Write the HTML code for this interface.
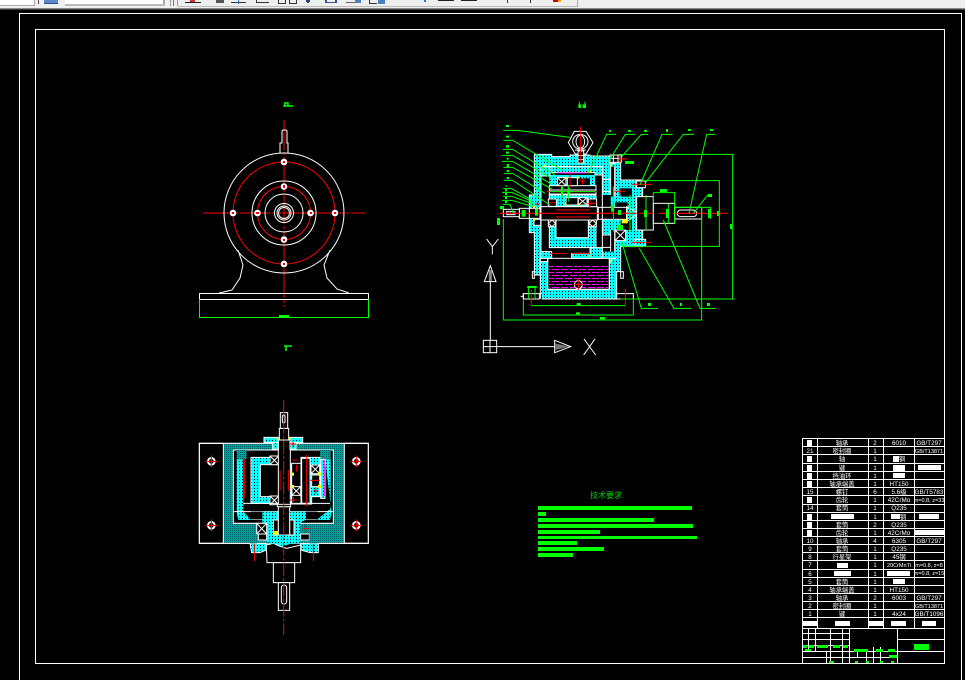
<!DOCTYPE html>
<html><head><meta charset="utf-8"><title>CAD</title>
<style>
html,body{margin:0;padding:0;background:#000;width:965px;height:680px;overflow:hidden}
svg{display:block;position:absolute;left:0;top:0}
text{font-family:"Liberation Sans","Noto Sans CJK SC",sans-serif;fill:#fff;font-size:6.300px;text-anchor:middle}
.w{fill:none;stroke:#fff}
.g{fill:none;stroke:#0f0}
.r{fill:none;stroke:#f00}
</style></head><body>
<svg width="965" height="680" viewBox="0 0 965 680" xmlns="http://www.w3.org/2000/svg">
<defs>
<pattern id="hz" width="9" height="9" patternUnits="userSpaceOnUse"><rect width="9" height="9" fill="#0ff" shape-rendering="crispEdges"/><rect x="3" y="3" width="3" height="3" fill="#000" shape-rendering="crispEdges"/></pattern>
<pattern id="hzd" width="6" height="6" patternUnits="userSpaceOnUse"><rect width="6" height="6" fill="#00a0a0" shape-rendering="crispEdges"/><rect width="3" height="3" fill="#005f5f" shape-rendering="crispEdges"/></pattern>
<pattern id="mg" width="27" height="18" patternUnits="userSpaceOnUse"><rect width="27" height="18" fill="#000" shape-rendering="crispEdges"/><rect x="0" y="0" width="21" height="3" fill="#f0f" shape-rendering="crispEdges"/><rect x="12" y="9" width="15" height="3" fill="#f0f" shape-rendering="crispEdges"/><rect x="0" y="9" width="6" height="3" fill="#f0f" shape-rendering="crispEdges"/></pattern>
</defs>
<rect width="965" height="680" fill="#000"/>

<!-- toolbar -->
<g shape-rendering="crispEdges">
<rect width="965" height="8" fill="#efefef"/>
<rect y="8" width="965" height="1" fill="#8c8c8c"/>
<rect y="9" width="965" height="1" fill="#3a3a3a"/>
<rect width="34" height="5" fill="#fff"/><rect x="34" width="1" height="6" fill="#aaa"/><rect y="5" width="35" height="1" fill="#aaa"/>
<rect x="38" width="1" height="4" fill="#555"/>
<rect x="44" width="14" height="3" fill="#5b87c9"/><rect x="44" y="3" width="14" height="1" fill="#2a4f90"/>
<rect x="65" width="98" height="4" fill="#fff"/><rect x="163" width="2" height="6" fill="#aaa"/><rect x="65" y="4" width="100" height="2" fill="#bbb"/>
<rect x="170" width="1" height="6" fill="#999"/><rect x="173" width="1" height="6" fill="#777"/><rect x="177" width="1" height="6" fill="#999"/>
<rect x="577" width="1" height="7" fill="#aaa"/><rect x="178" y="6" width="399" height="1" fill="#bbb"/>
<rect x="185" y="2" width="16" height="1" fill="#222"/><rect x="190" width="5" height="2" fill="#c33"/>
<rect x="216" width="8" height="3" fill="#555"/>
<rect x="231" y="2" width="15" height="1" fill="#333"/><rect x="238" width="1" height="4" fill="#27c"/>
<rect x="256" y="2" width="13" height="1" fill="#333"/><rect x="256" width="1" height="2" fill="#333"/>
<rect x="278" width="1" height="3" fill="#333"/><rect x="285" width="1" height="3" fill="#333"/><rect x="278" y="3" width="8" height="1" fill="#333"/>
<rect x="289" width="1" height="3" fill="#333"/><rect x="296" width="1" height="3" fill="#333"/><rect x="289" y="3" width="8" height="1" fill="#333"/>
<rect x="306" width="4" height="2" fill="#247"/><rect x="307" y="2" width="2" height="1" fill="#247"/>
<rect x="325" y="2" width="12" height="1" fill="#358"/><rect x="325" width="2" height="2" fill="#358"/><rect x="335" width="2" height="2" fill="#358"/>
<rect x="346" y="2" width="12" height="1" fill="#666"/><rect x="355" width="6" height="3" fill="#4a7fc0"/>
<rect x="369" y="3" width="8" height="1" fill="#333"/><rect x="369" width="1" height="3" fill="#333"/><rect x="378" width="7" height="4" fill="#4a7fc0"/>
<rect x="424" width="2" height="2" fill="#27c"/>
<rect x="438" width="16" height="1" fill="#222"/><rect x="461" width="16" height="1" fill="#222"/>
<rect x="507" width="1" height="3" fill="#333"/><rect x="530" width="1" height="3" fill="#333"/>
<rect x="553" width="5" height="2" fill="#c00"/><rect x="558" width="3" height="2" fill="#da0"/>
</g>

<!-- frames -->
<g shape-rendering="crispEdges" fill="none" stroke="#fff">
<path d="M19.500 680V13.500H961.500V680"/>
<rect x="35.500" y="29.500" width="909" height="634"/>
</g>

<!-- front view (left) -->
<g>
<path d="M203 213H365" stroke="#f00" stroke-dasharray="30 2 3 2" fill="none"/>
<path d="M284 120V307" stroke="#f00" stroke-dasharray="30 2 3 2" fill="none"/>
<g fill="none" stroke="#fff">
<circle cx="284" cy="213" r="60"/>
<circle cx="284" cy="213" r="32"/>
<circle cx="284" cy="213" r="19"/>
<circle cx="284" cy="213" r="9.500"/>
<circle cx="284" cy="213" r="7"/>
<circle cx="284" cy="213" r="5.500"/>
<path d="M280 153V143H282V131L283 130H286L287 131V143H288V153"/>
<path d="M238 250L243 265L240 278L232 290L219 293"/>
<path d="M330 250L324 265L327 278L337 289L349 293"/>
</g>
<rect x="199.500" y="293.500" width="169" height="6" fill="none" stroke="#fff" shape-rendering="crispEdges"/>
<circle cx="284" cy="213" r="51" fill="none" stroke="#f00"/>
<circle cx="284" cy="213" r="26.500" fill="none" stroke="#f00"/>
<g fill="#fff">
<circle cx="284" cy="162" r="3.300"/><circle cx="284" cy="264" r="3.300"/><circle cx="233" cy="213" r="3.300"/><circle cx="335" cy="213" r="3.300"/>
<circle cx="284" cy="186.500" r="3.300"/><circle cx="284" cy="239.500" r="3.300"/><circle cx="257.500" cy="213" r="3.300"/><circle cx="310.500" cy="213" r="3.300"/>
</g>
<g fill="#f00">
<rect x="283" y="161" width="2" height="2"/><rect x="283" y="263" width="2" height="2"/><rect x="232" y="212" width="2" height="2"/><rect x="334" y="212" width="2" height="2"/>
<rect x="283" y="185" width="2" height="3"/><rect x="283" y="239" width="2" height="2"/><rect x="256" y="212" width="3" height="2"/><rect x="310" y="212" width="2" height="2"/>
</g>
<path d="M199.500 299V317.500H368.500V299" fill="none" stroke="#0f0" shape-rendering="crispEdges"/>
<rect x="279" y="315" width="10" height="2" fill="#0f0"/>
<path d="M283 106H293M285 106V102M285 106V103H288V106" fill="none" stroke="#0f0" stroke-width="1.500"/>
</g>

<!-- main section (right) drawn in 3x coordinates -->
<g transform="translate(480 95) scale(.33333)" stroke-width="3">
<path d="M163 178H215V185H270V180H330V183H390V205H405V180H422V255H488V305H470V405H488V455H422V530H410V612H185L180 540H163V413H148V300H163Z" fill="url(#hz)"/>
<!-- interior -->
<path d="M183 215H270V212H330V215H367V300H392V345H367V420H392V470H367V490H183V300H183Z" fill="#000"/>
<rect x="392" y="215" width="12" height="90" fill="#000"/><rect x="392" y="405" width="12" height="65" fill="#000"/>
<rect x="422" y="280" width="34" height="25" fill="#000"/><rect x="405" y="322" width="38" height="50" fill="#000"/>
<rect x="422" y="375" width="34" height="30" fill="#000"/>
<!-- oil tank -->
<rect x="203" y="490" width="185" height="93" fill="#000" stroke="#fff"/>
<rect x="207" y="507" width="178" height="72" fill="url(#mg)"/>
<path d="M183 470H215V490H183ZM330 458H367V490H275V475H330Z" fill="url(#hz)" stroke="#fff"/>
<path d="M181 490H203V500H181Z" fill="#000" stroke="#fff"/>
<!-- planet gear body -->
<path d="M208 390H228V428H325V375H348V458H208Z" fill="url(#hz)" stroke="#fff"/>
<rect x="228" y="375" width="97" height="53" fill="#000" stroke="#fff"/>
<path d="M208 240H345V275H330V250H260V275H208Z" fill="url(#hz)"/>
<path d="M208 215H367V240H345V233H208Z" fill="url(#hz)" stroke="#fff"/>
<path d="M208 300H348V335H208Z" fill="url(#hz)" stroke="#fff"/>
<path d="M183 215H210V243H183Z" fill="url(#hz)" stroke="#fff"/>
<!-- shafts -->
<rect x="208" y="272" width="140" height="28" fill="#000" stroke="#fff"/>
<path d="M208 285H348M208 297H348" class="w"/>
<rect x="232" y="248" width="26" height="24" fill="#000" stroke="#fff"/><path d="M232 248L258 272M258 248L232 272" class="w"/>
<rect x="295" y="308" width="26" height="22" fill="#000" stroke="#fff"/><path d="M295 308L321 330M321 308L295 330" class="w"/>
<rect x="262" y="248" width="30" height="24" fill="#000" stroke="#fff"/><rect x="258" y="308" width="36" height="22" fill="#000" stroke="#fff"/>
<path d="M230 346Q285 330 335 346V370Q285 354 230 370Z" fill="url(#hz)" stroke="#fff"/>
<rect x="180" y="335" width="172" height="40" fill="#000" stroke="#fff"/>
<rect x="118" y="340" width="62" height="30" fill="#000" stroke="#fff"/>
<rect x="70" y="343" width="48" height="22" fill="#000" stroke="#fff"/><rect x="80" y="350" width="25" height="9" fill="none" stroke="#fff"/>
<rect x="355" y="337" width="85" height="36" fill="#000" stroke="#fff"/>
<path d="M440 335L475 355L440 380Z" fill="url(#hz)" stroke="#fff"/>
<path d="M405 405H437V437H405Z" fill="#000" stroke="#fff"/><path d="M405 405L437 437M437 405L405 437" class="w"/>
<rect x="205" y="375" width="22" height="20" fill="#000" stroke="#fff"/><path d="M205 385L216 375L227 385L216 395Z" class="w"/>
<rect x="327" y="375" width="22" height="20" fill="#000" stroke="#fff"/><path d="M327 385L338 375L349 385L338 395Z" class="w"/>
<rect x="162" y="373" width="20" height="18" fill="#000" stroke="#fff"/>
<rect x="205" y="312" width="24" height="22" fill="#000" stroke="#fff"/>
<path d="M325 312H350V335H325Z" fill="#000" stroke="#fff"/>
<!-- right output -->
<rect x="470" y="305" width="50" height="100" fill="#000" stroke="#fff"/>
<rect x="520" y="325" width="64" height="60" fill="#000" stroke="#fff"/>
<rect x="584" y="337" width="81" height="35" fill="#000" stroke="#fff"/>
<rect x="592" y="345" width="58" height="20" rx="10" fill="none" stroke="#fff"/>
<!-- housing outline -->
<path d="M163 178H215V185H270V180H330V183H390V205H405V180H422V255H488V305M488 405V455H422V530H410V612H185M180 540H163V413H148V300H163V178" class="w"/>
<path d="M183 243V490M367 233V490M392 215V300M404 215V305M392 405V470M404 405V470M367 253H392M367 290H392M367 420H392M367 457H392" class="w"/>
<path d="M203 490V583H388V490M181 500V612M410 490H388" class="w"/>
<rect x="130" y="596" width="48" height="16" fill="none" stroke="#fff"/>
<path d="M178 596H185M410 596H460V612H410" class="w"/>
<path d="M183 215H367" class="w"/>
<rect x="157" y="530" width="6" height="20" fill="none" stroke="#fff"/><rect x="422" y="530" width="8" height="20" fill="none" stroke="#fff"/>
<circle cx="295" cy="569" r="12" fill="#000" stroke="#fff"/>
<path d="M130 604H122M130 596V612" class="w"/>
<!-- eyebolt -->
<path d="M283 112H318L339 146L318 180H286L265 146Z" class="w" transform="translate(0 -3)"/>
<ellipse cx="301" cy="140" rx="23" ry="22" class="w"/><ellipse cx="301" cy="140" rx="13" ry="19" class="w"/>
<rect x="294" y="168" width="17" height="36" fill="#000" stroke="#fff"/><path d="M294 182H311M294 194H311" class="w"/>
<path d="M285 165H317" class="w"/>
<rect x="390" y="180" width="34" height="22" fill="#000" stroke="#fff"/><path d="M400 180V202M414 180V202M390 190H424" class="w"/>
<rect x="470" y="258" width="26" height="20" fill="#000" stroke="#fff"/><rect x="465" y="433" width="32" height="20" fill="url(#hz)" stroke="#fff"/>
<!-- red -->
<path d="M60 355H470M478 355H520M536 355H560M580 355H745" stroke="#f00" stroke-width="3.500" fill="none"/>
<path d="M301 95V205" stroke="#f00" stroke-width="3"/>
<path d="M210 475H262M276 475H330M232 234H325" stroke="#f00" fill="none"/>
<path d="M228 366H330M228 345H330" stroke="#f00" fill="none"/>
<path d="M270 232V280M200 290H350" class="r"/>
<path d="M420 278V300M404 289H436M415 192H442M420 183V202M455 268H515M455 442H515M330 313V336M322 325H348M298 258H318M308 250V268M208 323H225M165 327H180M172 320V334" class="r"/>
<path d="M154 585V630M436 582V630M295 550V585M280 568H310" class="r"/>
<path d="M232 234H325" stroke="#f0f" fill="none"/>
<!-- yellow -->
<g fill="#ff0">
<rect x="425" y="373" width="18" height="12"/><rect x="390" y="208" width="6" height="7"/><rect x="327" y="226" width="6" height="7"/><rect x="254" y="245" width="6" height="6"/><rect x="291" y="245" width="6" height="6"/><rect x="254" y="326" width="6" height="6"/><rect x="291" y="326" width="6" height="6"/><rect x="160" y="333" width="6" height="6"/><rect x="160" y="371" width="6" height="6"/><rect x="327" y="480" width="6" height="6"/><rect x="390" y="496" width="6" height="6"/><rect x="192" y="208" width="6" height="6"/>
</g>
<!-- green leaders -->
<g fill="none" stroke="#0f0">
<path d="M70 106H112L270 127"/>
<path d="M70 136H98L248 225"/><path d="M68 163H98L225 240"/><path d="M66 181H98L215 250"/><path d="M66 199H98L215 268"/><path d="M70 217H98L215 282"/><path d="M72 235H98L195 295"/><path d="M72 256H98L210 330"/>
<path d="M70 281H95L150 312"/><path d="M66 292H95L158 320"/><path d="M70 304H95L160 327"/><path d="M66 316H95L160 335"/><path d="M68 328H90L100 355"/>
<path d="M408 118H380L325 235"/><path d="M466 118H436L385 200"/><path d="M504 118H484L425 185"/>
<path d="M578 118H546L480 270"/><path d="M642 118H610L495 265"/><path d="M705 118H680L627 355"/>
<path d="M692 301H682L640 355"/>
<path d="M534 640H484L425 440"/><path d="M633 640H582L478 460"/><path d="M708 640H660L550 375"/>
<path d="M422 178H758V612M422 612H764M415 178H464"/>
<path d="M488 257H718V454H425M718 257V454"/>
<path d="M498 300V405M584 337H692V372M520 293H584V385M520 293V325"/>
<path d="M565 325V385M400 275V410M450 300V410"/>
<path d="M70 372V675H665V337"/>
<path d="M130 612V660H460V612M154 632H436"/>
<path d="M142 575H170M146 575V612M165 575V612"/>
<path d="M245 270V320M265 270V320M210 290H345"/>
</g>
<g fill="#0f0">
<rect x="78" y="90" width="9" height="6"/><rect x="78" y="122" width="9" height="6"/><rect x="78" y="150" width="9" height="8"/><rect x="78" y="170" width="9" height="6"/><rect x="80" y="188" width="6" height="6"/><rect x="80" y="207" width="7" height="9"/><rect x="80" y="225" width="7" height="6"/><rect x="80" y="246" width="7" height="6"/>
<rect x="77" y="270" width="3" height="6"/><rect x="75" y="283" width="6" height="6"/><rect x="75" y="294" width="6" height="6"/><rect x="75" y="306" width="6" height="6"/><rect x="75" y="318" width="6" height="6"/><rect x="60" y="333" width="12" height="10"/>
<rect x="387" y="105" width="6" height="6"/><rect x="444" y="105" width="9" height="6"/><rect x="492" y="105" width="9" height="6"/><rect x="558" y="102" width="6" height="9"/><rect x="624" y="102" width="9" height="6"/><rect x="690" y="102" width="9" height="6"/><rect x="684" y="297" width="12" height="9"/>
<rect x="504" y="624" width="9" height="9"/><rect x="600" y="624" width="6" height="9"/><rect x="681" y="624" width="9" height="9"/>
<rect x="290" y="624" width="12" height="7"/><rect x="288" y="652" width="12" height="6"/><rect x="360" y="666" width="15" height="7"/>
<rect x="750" y="387" width="6" height="15"/><rect x="711" y="348" width="6" height="15"/><rect x="684" y="342" width="9" height="27"/>
<rect x="540" y="282" width="21" height="9"/><rect x="492" y="345" width="9" height="21"/><rect x="558" y="342" width="9" height="27"/>
<rect x="51" y="369" width="9" height="21"/><rect x="125" y="345" width="12" height="20"/><rect x="165" y="342" width="9" height="20"/>
<rect x="435" y="198" width="27" height="9"/><rect x="411" y="390" width="18" height="15"/><rect x="393" y="330" width="9" height="20"/><rect x="414" y="345" width="9" height="15"/>
<rect x="243" y="275" width="6" height="30"/><rect x="262" y="280" width="9" height="18"/><rect x="142" y="573" width="28" height="6"/>
</g>
<path d="M298 20V30M315 20V30" stroke="#0f0" fill="none" stroke-width="3"/>
<path d="M295 28H303V39H295ZM308 28H318V39H308Z" fill="#0f0"/>
<!-- UCS icon -->
<g fill="none" stroke="#fff">
<path d="M20 432L37 455L55 432M37 455V478"/>
<path d="M31 735V560M13 560H48L31 512Z"/>
<path d="M31 525L31 558" stroke="#888" stroke-width="9"/>
<rect x="10" y="736" width="40" height="37"/><path d="M30 736V773M10 755H50"/>
<path d="M50 755H222M224 736V773L272 755Z"/>
<path d="M312 732L347 780M345 732L311 780"/>
</g>
<path d="M226 745V765L268 755Z" fill="#777"/>
</g>

<!-- plan view (bottom-left), 3x coordinates -->
<g transform="translate(190 400) scale(.33333)" stroke-width="3">
<rect x="28" y="130" width="507" height="300" fill="#000" stroke="#fff"/>
<rect x="100" y="130" width="363" height="300" fill="url(#hzd)"/>
<path d="M140 130H420V178H405V150H308V145H256V150H170V178H140Z" fill="url(#hzd)"/>
<rect x="130" y="150" width="300" height="220" fill="#000" stroke="#fff"/>
<path d="M140 150H170V178H140ZM390 150H422V178H390Z" fill="url(#hzd)"/>
<path d="M140 178H160V335L183 360H145L140 340Z" fill="url(#hz)"/>
<path d="M405 178H422V325L380 360H420L425 335Z" fill="url(#hz)"/>
<path d="M163 295V178H158M163 178V265" class="r"/>
<path d="M183 172H240V195H268V290H240V310H183Z" fill="url(#hz)" stroke="#fff"/>
<rect x="211" y="194" width="57" height="96" fill="#000" stroke="#fff"/>
<rect x="240" y="168" width="26" height="26" fill="#000" stroke="#fff"/><path d="M240 168L266 194M266 168L240 194" class="w"/>
<rect x="240" y="288" width="26" height="26" fill="#000" stroke="#fff"/><path d="M240 288L266 314M266 288L240 314" class="w"/>
<path d="M290 195H305V310H298L290 270Z" fill="url(#hz)" stroke="#fff"/>
<rect x="305" y="190" width="28" height="122" fill="#000" stroke="#fff"/>
<path d="M333 172H390V290H365V312H333Z" fill="url(#hz)" stroke="#fff"/>
<rect x="335" y="175" width="25" height="135" fill="#000" stroke="#fff"/>
<rect x="363" y="195" width="26" height="26" fill="#000" stroke="#fff"/><path d="M363 195L389 221M389 195L363 221" class="w"/>
<rect x="306" y="260" width="26" height="26" fill="#000" stroke="#fff"/><path d="M306 260L332 286M332 260L306 286" class="w"/>
<rect x="365" y="225" width="24" height="35" fill="#000" stroke="#fff"/>
<path d="M392 178H405V295H392Z" fill="url(#hz)" stroke="#fff"/>
<path d="M130 335H430" class="w"/><path d="M160 310H420M183 358H380" class="w"/>
<!-- gear -->
<path d="M217 335H265V405H300V335H350L312 365V405H330V430H290L265 440L250 425H230V370H217Z" fill="url(#hz)"/>
<path d="M300 360L348 335V358L330 370V405H300Z" fill="url(#hz)"/>
<rect x="200" y="370" width="30" height="32" fill="#000" stroke="#fff"/><path d="M200 370L230 402M230 370L200 402" class="w"/>
<path d="M205 402H230V420H205ZM332 402H358V420H332Z" fill="#000" stroke="#fff"/>
<rect x="250" y="360" width="15" height="45" fill="#000" stroke="#fff"/><rect x="299" y="360" width="13" height="45" fill="#000" stroke="#fff"/>
<path d="M180 430H229V450L210 458H185ZM332 430H385V458H360L332 450Z" fill="url(#hz)" stroke="#fff"/>
<rect x="183" y="335" width="34" height="23" fill="#000"/><rect x="348" y="335" width="34" height="23" fill="#000"/>
<path d="M358 370H430V430H358ZM130 370H200V430H130Z" fill="url(#hzd)"/>
<path d="M130 370H200V402M358 370H430" class="w"/>
<rect x="28" y="130" width="72" height="300" fill="none" stroke="#fff"/><rect x="463" y="130" width="72" height="300" fill="none" stroke="#fff"/>
<path d="M28 430H180M385 430H535M28 130H535" class="w"/>
<!-- shaft -->
<rect x="265" y="120" width="36" height="200" fill="#000" stroke="#fff"/>
<rect x="265" y="320" width="34" height="85" fill="#000" stroke="#fff"/>
<rect x="262" y="313" width="40" height="7" fill="#000" stroke="#fff"/>
<path d="M222 112H338V128H300V120H265V128H222Z" fill="url(#hz)" stroke="#fff"/>
<rect x="248" y="128" width="17" height="20" fill="url(#hz)" stroke="#fff"/><rect x="300" y="128" width="18" height="20" fill="url(#hz)" stroke="#fff"/>
<rect x="268" y="85" width="28" height="35" fill="#000" stroke="#fff"/>
<rect x="271" y="38" width="22" height="47" fill="#000" stroke="#fff"/>
<rect x="277" y="45" width="8" height="24" rx="4" fill="none" stroke="#fff"/>
<path d="M229 435L250 430L268 438L290 445L332 435V488H231Z" fill="#000" stroke="#fff"/>
<rect x="250" y="488" width="64" height="60" fill="#000" stroke="#fff"/>
<rect x="265" y="548" width="34" height="83" fill="#000" stroke="#fff"/>
<rect x="274" y="555" width="16" height="57" rx="8" fill="none" stroke="#fff"/>
<path d="M229 430L262 432L275 440L300 432L312 430L332 415H290V405H262L250 425Z" fill="url(#hz)"/>
<path d="M281 0V705" stroke="#f00" stroke-dasharray="40 6 9 6" fill="none"/>
<path d="M350 165V318M360 241H390M160 178V292M270 210V272M295 210V272M300 300H320M310 290V310M370 272H385M377 262V282M340 385H358M347 375V395M300 132H318M309 125V140M308 180H322M320 195V215" class="r"/>
<path d="M193 432V483M370 432V483" class="r"/>
<path d="M403 180V288" stroke="#f0f" fill="none"/>
<g fill="#ff0"><rect x="252" y="393" width="12" height="12"/><rect x="303" y="218" width="9" height="9"/><rect x="303" y="255" width="9" height="9"/><rect x="384" y="218" width="9" height="9"/><rect x="384" y="255" width="9" height="9"/><rect x="260" y="113" width="6" height="6"/><rect x="296" y="113" width="6" height="6"/></g>
<!-- bolts -->
<g fill="none" stroke="#fff" stroke-width="6">
<circle cx="64" cy="184" r="10"/><circle cx="64" cy="376" r="10"/><circle cx="499" cy="184" r="10"/><circle cx="499" cy="376" r="10"/>
</g>
<path d="M46 184H82M64 166V202M46 376H82M64 358V394M481 184H517M499 166V202M481 376H517M499 358V394" class="r"/>
</g>

<!-- technical requirement -->
<text x="606" y="498" style="fill:#00d000;font-size:8px">技术要求</text>
<g fill="#0f0" shape-rendering="crispEdges">
<rect x="538" y="506" width="154" height="4"/><rect x="538" y="512" width="8" height="4"/><rect x="538" y="518" width="116" height="4"/><rect x="538" y="524" width="155" height="4"/><rect x="538" y="530" width="62" height="4"/><rect x="538" y="536" width="159" height="3"/><rect x="538" y="541" width="39" height="4"/><rect x="538" y="547" width="66" height="4"/><rect x="538" y="553" width="35" height="4"/>
</g>

<!-- parts table -->
<g shape-rendering="crispEdges" fill="none" stroke="#fff">
<path d="M802.500 438.500H944M802.500 446.500H944M802.500 454.500H944M802.500 463.500H944M802.500 471.500H944M802.500 479.500H944M802.500 487.500H944M802.500 495.500H944M802.500 504.500H944M802.500 512.500H944M802.500 520.500H944M802.500 528.500H944M802.500 536.500H944M802.500 544.500H944M802.500 552.500H944M802.500 560.500H944M802.500 569.500H944M802.500 577.500H944M802.500 585.500H944M802.500 593.500H944M802.500 601.500H944M802.500 609.500H944M802.500 617.500H944M802.500 628.500H944"/>
<path d="M802.500 438V663M817.500 438V628M868.500 438V628M883.500 438V628M914.500 438V628"/>
<!-- title block -->
<path d="M802.500 633.500H849M802.500 639.500H849M802.500 645.500H849M802.500 651.500H897M802.500 657.500H897M849.500 628V663M897.500 628V663M897.500 639.500H944M897.500 651.500H944"/>
<path d="M808.500 628V651M815.500 628V651M830.500 628V663M842.500 628V663M826.500 651V663M873.500 647V663M866.500 652V663M857.500 652V657M880.500 647V663"/>
</g>
<g fill="#fff" shape-rendering="crispEdges">
<rect x="807" y="440" width="5" height="6"/><rect x="807" y="456" width="5" height="6"/><rect x="807" y="465" width="5" height="6"/><rect x="807" y="473" width="5" height="6"/><rect x="807" y="481" width="5" height="6"/><rect x="807" y="497" width="5" height="6"/><rect x="807" y="514" width="5" height="6"/><rect x="807" y="522" width="5" height="6"/><rect x="807" y="530" width="5" height="6"/>
<rect x="893" y="456" width="6" height="6"/><rect x="893" y="465" width="12" height="6"/><rect x="918" y="465" width="23" height="5"/><rect x="893" y="473" width="12" height="5"/>
<rect x="831" y="514" width="23" height="5"/><rect x="891" y="514" width="9" height="5"/><rect x="919" y="514" width="20" height="5"/><rect x="915" y="530" width="29" height="5"/>
<rect x="837" y="563" width="11" height="5"/><rect x="834" y="571" width="17" height="5"/><rect x="887" y="571" width="23" height="5"/><rect x="893" y="579" width="12" height="5"/>
<rect x="803" y="621" width="14" height="5"/><rect x="835" y="621" width="15" height="5"/><rect x="869" y="621" width="14" height="5"/><rect x="891" y="621" width="15" height="5"/><rect x="922" y="621" width="14" height="5"/>
</g>
<g fill="#0f0" shape-rendering="crispEdges">
<rect x="803" y="645" width="4" height="3"/><rect x="809" y="645" width="5" height="3"/><rect x="817" y="645" width="11" height="3"/><rect x="833" y="645" width="7" height="3"/><rect x="843" y="645" width="5" height="3"/>
<rect x="805" y="649" width="6" height="2"/><rect x="854" y="649" width="14" height="3"/><rect x="876" y="649" width="7" height="3"/><rect x="888" y="649" width="7" height="3"/>
<rect x="889" y="655" width="8" height="3"/><rect x="829" y="661" width="5" height="2"/><rect x="855" y="661" width="3" height="2"/><rect x="866" y="661" width="3" height="2"/><rect x="880" y="661" width="3" height="2"/><rect x="891" y="661" width="3" height="2"/>
<rect x="914" y="644" width="15" height="6"/>
</g>
<g>
<text x="842" y="445">轴承</text><text x="875" y="445">2</text><text x="899" y="445">6010</text><text x="929" y="445">GB/T297</text>
<text x="810" y="453">21</text><text x="842" y="453">密封圈</text><text x="875" y="453">1</text><text x="929" y="453" style="font-size:5.500px">GB/T13871</text>
<text x="842" y="461">轴</text><text x="875" y="461">1</text><text x="902" y="461">钢</text>
<text x="842" y="470">键</text><text x="875" y="470">1</text>
<text x="842" y="478">挡油环</text><text x="875" y="478">1</text>
<text x="842" y="486">轴承端盖</text><text x="875" y="486">1</text><text x="899" y="486">HT150</text>
<text x="810" y="494">15</text><text x="842" y="494">螺钉</text><text x="875" y="494">6</text><text x="899" y="494">5.6级</text><text x="929" y="494">GB/T5783</text>
<text x="842" y="502">齿轮</text><text x="875" y="502">1</text><text x="899" y="502">42CrMo</text><text x="929" y="502" style="font-size:5.500px">m=0.8, z=33</text>
<text x="810" y="510">14</text><text x="842" y="510">套筒</text><text x="875" y="510">1</text><text x="899" y="510">Q235</text>
<text x="875" y="519">1</text><text x="903" y="519">钢</text>
<text x="842" y="527">套筒</text><text x="875" y="527">2</text><text x="899" y="527">Q235</text>
<text x="842" y="535">齿轮</text><text x="875" y="535">1</text><text x="899" y="535">42CrMo</text>
<text x="810" y="543">10</text><text x="842" y="543">轴承</text><text x="875" y="543">4</text><text x="899" y="543">6305</text><text x="929" y="543">GB/T297</text>
<text x="810" y="551">9</text><text x="842" y="551">套筒</text><text x="875" y="551">1</text><text x="899" y="551">Q235</text>
<text x="810" y="559">8</text><text x="842" y="559">行星架</text><text x="875" y="559">1</text><text x="899" y="559">45钢</text>
<text x="810" y="567">7</text><text x="875" y="567">1</text><text x="899" y="567" style="font-size:5.500px">20CrMnTi</text><text x="929" y="567" style="font-size:5.500px">m=0.8, z=8</text>
<text x="810" y="576">6</text><text x="875" y="576">1</text><text x="929" y="575" style="font-size:5.500px">m=0.8, z=15</text>
<text x="810" y="584">5</text><text x="842" y="584">套筒</text><text x="875" y="584">1</text>
<text x="810" y="592">4</text><text x="842" y="592">轴承端盖</text><text x="875" y="592">1</text><text x="899" y="592">HT150</text>
<text x="810" y="600">3</text><text x="842" y="600">轴承</text><text x="875" y="600">2</text><text x="899" y="600">6003</text><text x="929" y="600">GB/T297</text>
<text x="810" y="608">2</text><text x="842" y="608">密封圈</text><text x="875" y="608">1</text><text x="929" y="608" style="font-size:5.500px">GB/T13871</text>
<text x="810" y="616">1</text><text x="842" y="616">键</text><text x="875" y="616">1</text><text x="899" y="616">4x24</text><text x="929" y="616">GB/T1096</text>
</g>
<path d="M284 346H292M286 346V351" stroke="#0f0" fill="none" stroke-width="1.500"/>
</svg>
</body></html>
